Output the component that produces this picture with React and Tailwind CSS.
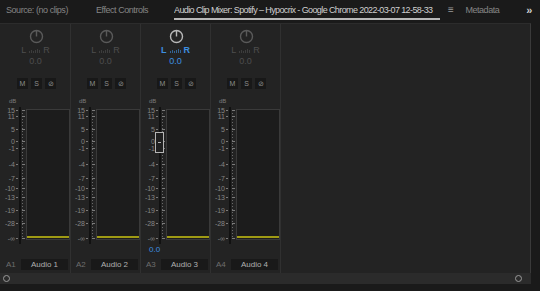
import React from 'react';

const scale = [
  ['15', 14], ['11', 20], ['5', 33], ['0', 45], ['-1', 52], ['-4', 68],
  ['-7', 82], ['-10', 92], ['-13', 101], ['-19', 114], ['-28', 127], ['-∞', 142],
];

const strips = [
  { id: 'A1', name: 'Audio 1', active: false },
  { id: 'A2', name: 'Audio 2', active: false },
  { id: 'A3', name: 'Audio 3', active: true },
  { id: 'A4', name: 'Audio 4', active: false },
];

const Knob = ({ active }) => (
  <svg width="15" height="15" viewBox="0 0 15 15">
    <circle cx="7.5" cy="7.5" r="6" fill="none" stroke={active ? '#b8b8b8' : '#5a5a5a'} strokeWidth="1.4" />
    <line x1="7.5" y1="1.5" x2="7.5" y2="7.5" stroke={active ? '#b8b8b8' : '#5a5a5a'} strokeWidth="1.4" />
  </svg>
);

const Scale = () => {
  const ticks = [];
  for (let y = 14; y <= 142; y += 3) ticks.push(y);
  return (
    <svg className="absolute left-0 top-0" width="26" height="150" viewBox="0 0 26 150">
      <rect x="18" y="11" width="2" height="137" fill="#111" />
      {ticks.map(y => (
        <rect key={y} x="21" y={y} width="1" height="1" fill="#6a6a6a" />
      ))}
      {scale.map(([l, y]) => (
        <g key={l}>
          <rect x="15" y={y} width="2" height="1" fill="#7a7a7a" />
          <rect x="21" y={y} width="3" height="1" fill="#7a7a7a" />
        </g>
      ))}
    </svg>
  );
};

const Strip = ({ strip }) => {
  const dim = strip.active ? 'text-[#3d8fe0]' : 'text-[#4e4e4e]';
  return (
    <div className="w-[70px] shrink-0 border-r border-[#303030] flex flex-col pt-[5px]">
      <div className="h-[15px] flex justify-center pl-[1px]">
        <Knob active={strip.active} />
      </div>
      <div className={`h-[8px] mt-[2px] flex items-center justify-center gap-[3px] text-[9px] leading-none ${dim}`}>
        <span className={strip.active ? 'font-bold' : ''}>L</span>
        <span className="flex items-end gap-[1px] h-[5px]">
          <span className="w-[1px] h-[2px] bg-current opacity-60" />
          <span className="w-[1px] h-[3px] bg-current opacity-60" />
          <span className="w-[1px] h-[2px] bg-current opacity-60" />
          <span className="w-[1px] h-[3px] bg-current opacity-60" />
          <span className="w-[1px] h-[4px] bg-current opacity-60" />
          <span className="w-[1px] h-[3px] bg-current opacity-60" />
        </span>
        <span className={strip.active ? 'font-bold' : ''}>R</span>
      </div>
      <div className={`h-[8px] mt-[3px] text-center text-[9px] leading-[8px] ${dim}`}>0.0</div>
      <div className="h-[11px] mt-[13px] flex gap-[3px] pl-[16px]">
        {['M', 'S', '⊘'].map(b => (
          <div key={b} className="w-[11px] h-[11px] bg-[#181818] text-[#8c8c8c] text-[7px] leading-[11px] text-center">{b}</div>
        ))}
      </div>
      <div className="relative h-[150px] mt-[7px]">
        <Scale />
        <div className="absolute left-[8px] top-[2px] text-[6px] leading-none text-[#7a7a7a]">dB</div>
        {scale.map(([l, y]) => (
          <div key={l} className="absolute left-0 w-[14px] text-right text-[7px] leading-none text-[#858585]" style={{ top: y - 3 }}>{l}</div>
        ))}
        <div className="absolute left-[25px] top-[13px] w-[44px] h-[131px] border border-[#3a3a3a] bg-[#1c1c1c] flex items-end">
          <div className="w-full h-[2px] bg-[#9f9a14] mb-[1px]" />
        </div>
        {strip.active && (
          <div className="absolute left-[14px] top-[36px] w-[9px] h-[21px] border border-[#b5b5b5] bg-[#202020] flex items-center justify-center">
            <div className="w-[3px] h-[1px] bg-[#b5b5b5]" />
          </div>
        )}
      </div>
      <div className="h-[10px] text-[8px] leading-[10px] text-[#3d8fe0] pl-[8px]">{strip.active ? '0.0' : ''}</div>
      <div className="h-[11px] mt-[4px] flex items-center">
        <span className="w-[20px] pl-[5px] text-[8px] text-[#6e6e6e]">{strip.id}</span>
        <div className="w-[47px] h-[11px] bg-[#191919] text-[#b0b0b0] text-[8px] leading-[11px] text-center">{strip.name}</div>
      </div>
      <div className="h-[3px]" />
    </div>
  );
};

export default function App() {
  return (
    <div
      className="w-[540px] h-[291px] bg-[#1a1a1a] overflow-hidden flex flex-col"
      style={{ fontFamily: '"Liberation Sans", Arial, sans-serif' }}
    >
      <div className="h-[23px] flex items-start pt-[5px] text-[9px] leading-[10px] tracking-[-0.45px] text-[#858585] whitespace-nowrap shrink-0">
        <span className="ml-[6px] w-[90px]">Source: (no clips)</span>
        <span className="w-[78px]">Effect Controls</span>
        <span className="w-[266px] overflow-hidden text-[#cfcfcf] border-b-2 border-[#b8b8b8] pb-[3px] tracking-[-0.6px]">
          Audio Clip Mixer: Spotify – Hypocrix - Google Chrome 2022-03-07 12-58-33
        </span>
        <span className="ml-[8px] text-[#9a9a9a] text-[10px]">≡</span>
        <span className="ml-[12px]">Metadata</span>
        <span className="ml-auto mr-[8px] text-[#cfcfcf] font-bold text-[11px]">»</span>
      </div>
      <div className="w-[531px] h-[250px] bg-[#232323] border-t border-[#2c2c2c] border-r border-r-[#3a3a3a] flex pl-[1px] shrink-0">
        {strips.map(s => <Strip key={s.id} strip={s} />)}
      </div>
      <div className="w-[531px] h-[11px] bg-[#2b2b2b] flex items-center justify-between px-[3px] shrink-0">
        <div className="w-[7px] h-[7px] rounded-full border-[1.5px] border-[#9a9a9a]" />
        <div className="w-[7px] h-[7px] rounded-full border-[1.5px] border-[#9a9a9a] mr-[6px]" />
      </div>
    </div>
  );
}
